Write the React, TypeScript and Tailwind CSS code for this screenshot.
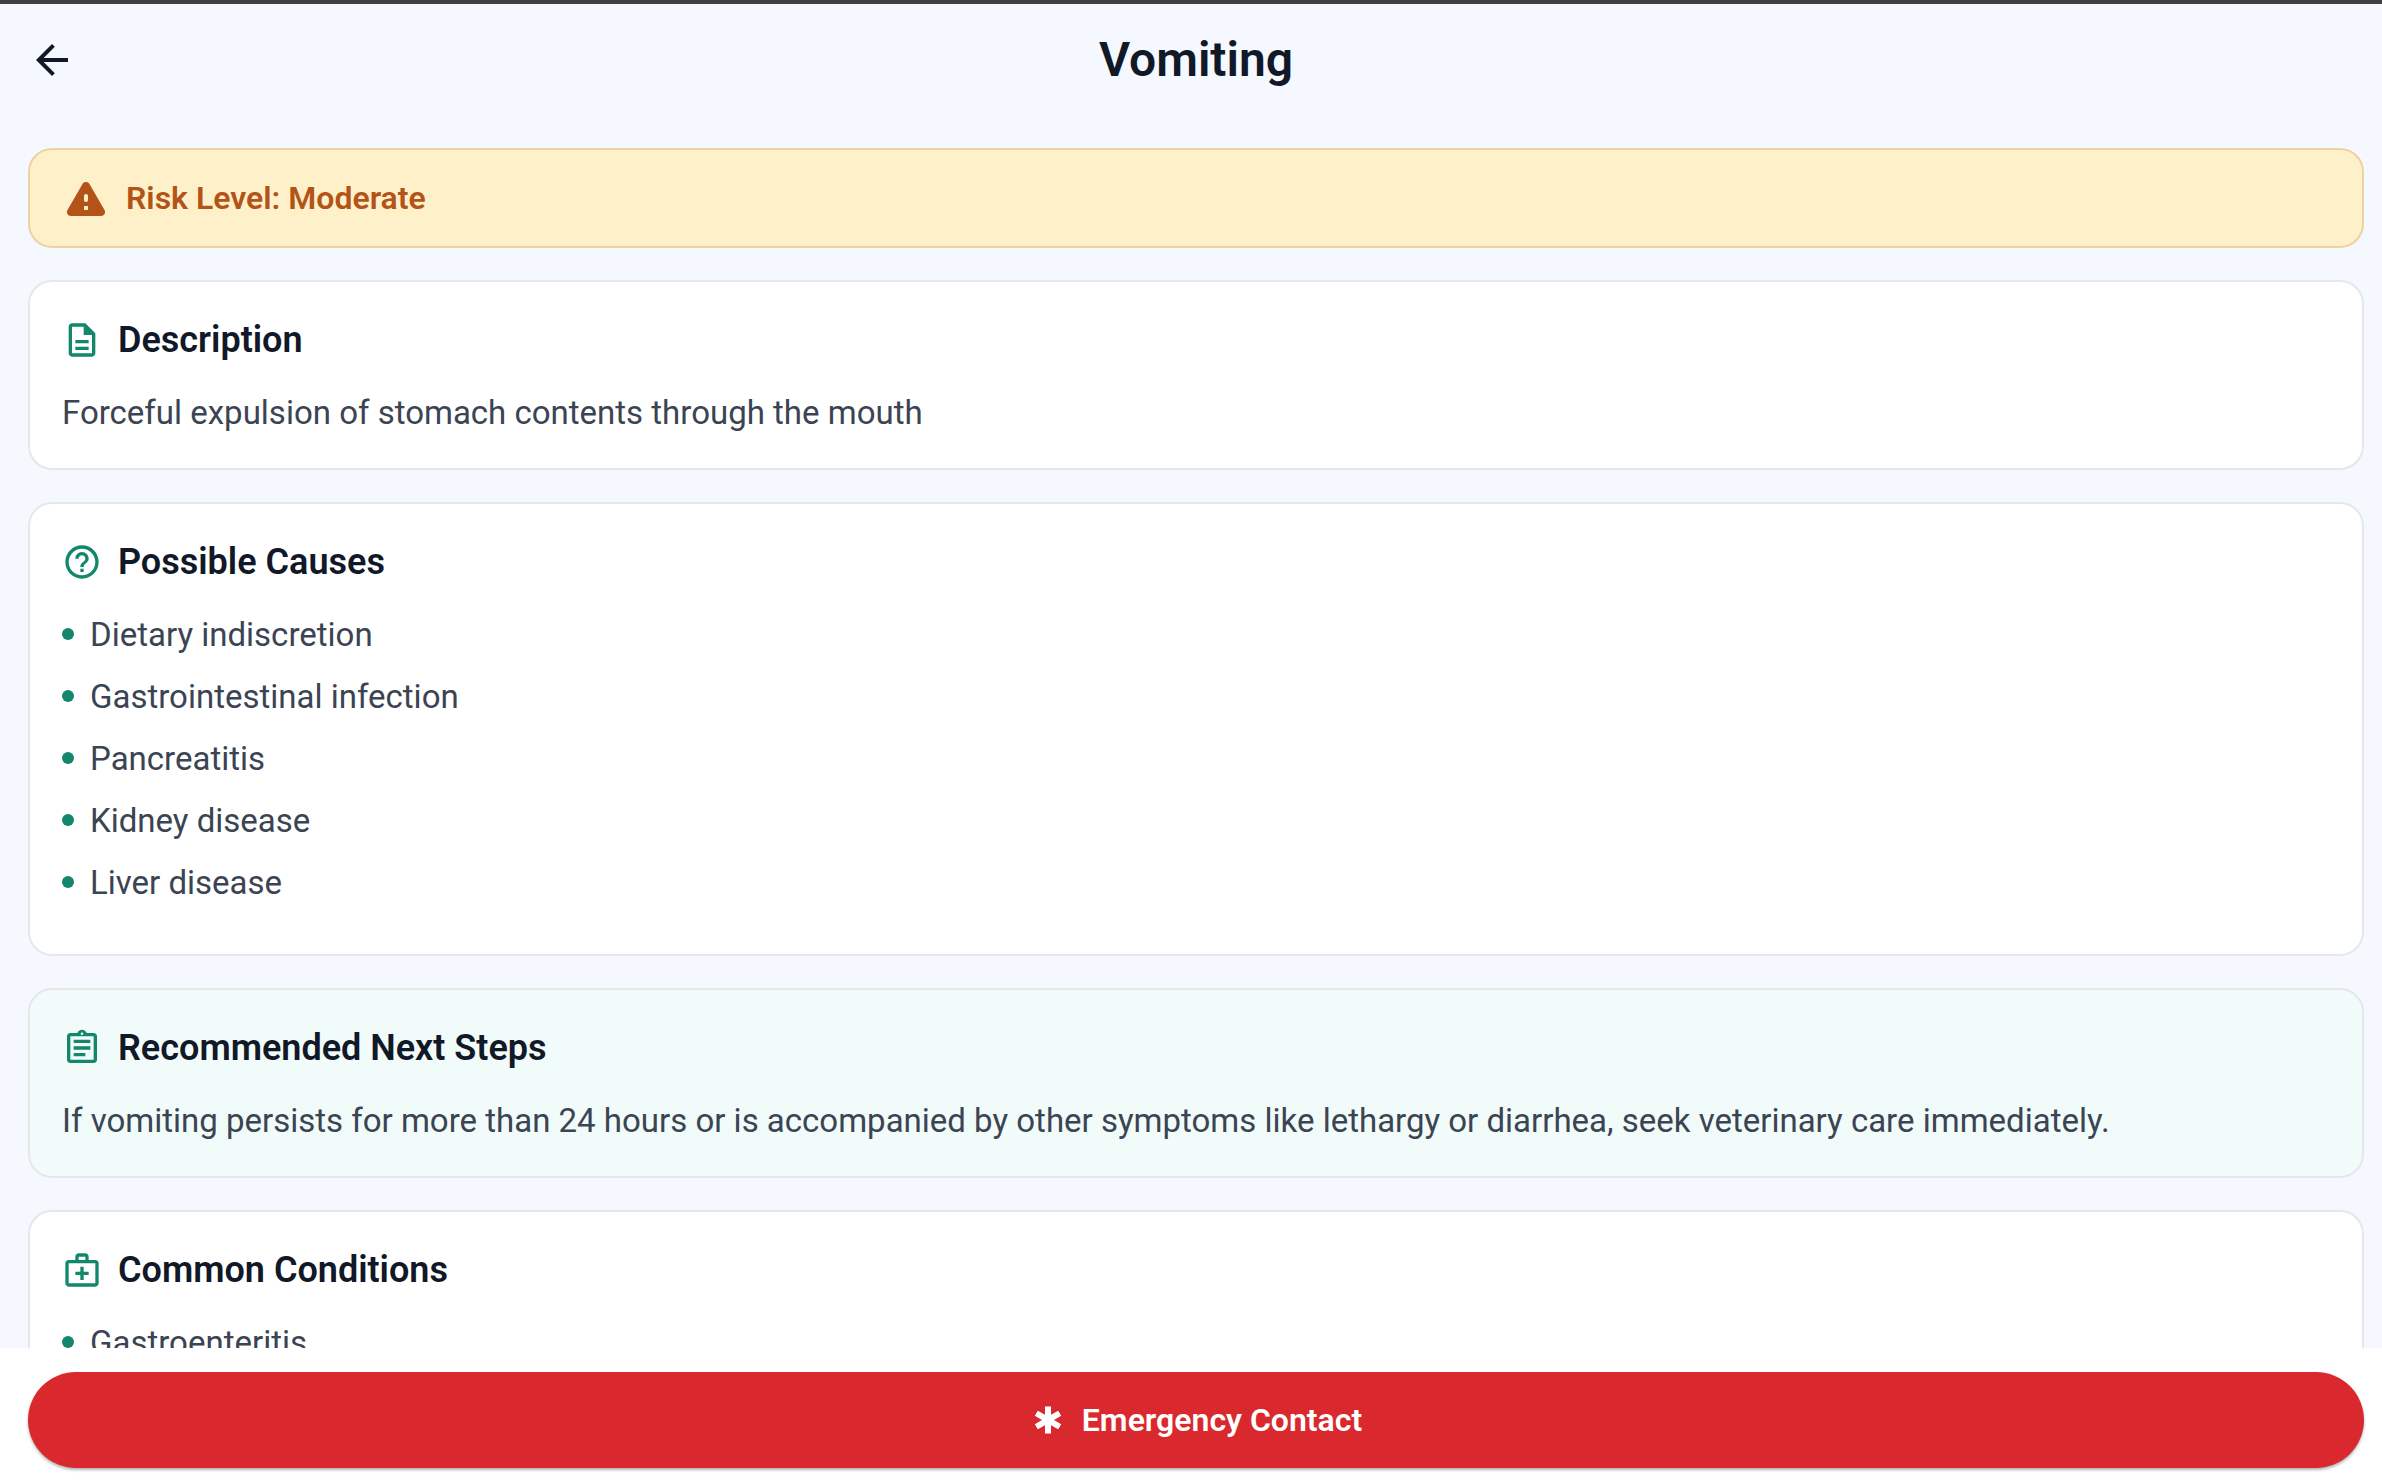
import type { ReactNode } from "react";
import {
  MdArrowBack,
  MdEmergency,
  MdHelpOutline,
  MdOutlineAssignment,
  MdOutlineDescription,
  MdOutlineMedicalServices,
} from "react-icons/md";

const causes = [
  "Dietary indiscretion",
  "Gastrointestinal infection",
  "Pancreatitis",
  "Kidney disease",
  "Liver disease",
];

const conditions = ["Gastroenteritis"];

function WarningIcon() {
  return (
    <svg viewBox="0 0 24 24" className="size-12 shrink-0" fill="currentColor" aria-hidden="true">
      <path d="M4.47 21h15.06c1.54 0 2.5-1.67 1.73-3L13.73 4.99c-.77-1.33-2.69-1.33-3.46 0L2.74 18c-.77 1.33.19 3 1.73 3zM12 14c-.55 0-1-.45-1-1v-2c0-.55.45-1 1-1s1 .45 1 1v2c0 .55-.45 1-1 1zm1 4h-2v-2h2v2z" />
    </svg>
  );
}

function Card({
  icon,
  title,
  tinted = false,
  children,
}: {
  icon: ReactNode;
  title: string;
  tinted?: boolean;
  children: ReactNode;
}) {
  return (
    <section
      className={`rounded-3xl border-2 border-[#e5e7eb] p-8 ${tinted ? "bg-[#f1fbf9]" : "bg-white"}`}
    >
      <div className="mb-6 flex items-center gap-4">
        <span className="shrink-0 text-[40px] text-[#12876b]">{icon}</span>
        <h2 className="text-[36px] leading-[52px] font-semibold text-[#111827]">{title}</h2>
      </div>
      {children}
    </section>
  );
}

function BulletList({ items }: { items: string[] }) {
  return (
    <ul>
      {items.map((item) => (
        <li key={item} className="mb-4 flex items-start gap-4">
          <span className="mt-4 size-3 shrink-0 rounded-full bg-[#12876b]" />
          <span className="text-[33px] leading-[46px] text-[#3b4453]">{item}</span>
        </li>
      ))}
    </ul>
  );
}

export default function App() {
  return (
    <div className="flex h-screen flex-col border-t-4 border-[#414141] bg-[#f5f8ff] font-[Roboto,sans-serif]">
      <header className="grid h-28 shrink-0 grid-cols-[1fr_auto_1fr] items-center pr-[18px] pl-7">
        <button type="button" aria-label="Back" className="justify-self-start text-5xl text-[#111827]">
          <MdArrowBack />
        </button>
        <h1 className="text-[48px] leading-none font-semibold text-[#111827]">Vomiting</h1>
      </header>

      <main className="flex min-h-0 flex-1 flex-col gap-8 overflow-y-auto pt-8 pr-[18px] pl-7 [scrollbar-width:none] *:shrink-0">
        <div className="flex items-center gap-4 rounded-3xl border-2 border-[#eed2a2] bg-[#fef1ca] px-8 py-6 text-[#b45318]">
          <WarningIcon />
          <p className="text-[32px] leading-[46px] font-semibold">Risk Level: Moderate</p>
        </div>

        <Card icon={<MdOutlineDescription />} title="Description">
          <p className="text-[33px] leading-[46px] text-[#3b4453]">
            Forceful expulsion of stomach contents through the mouth
          </p>
        </Card>

        <Card icon={<MdHelpOutline />} title="Possible Causes">
          <BulletList items={causes} />
        </Card>

        <Card icon={<MdOutlineAssignment />} title="Recommended Next Steps" tinted>
          <p className="text-[33px] leading-[46px] text-[#3b4453]">
            If vomiting persists for more than 24 hours or is accompanied by other symptoms like
            lethargy or diarrhea, seek veterinary care immediately.
          </p>
        </Card>

        <Card icon={<MdOutlineMedicalServices />} title="Common Conditions">
          <BulletList items={conditions} />
        </Card>
      </main>

      <footer className="shrink-0 bg-white pt-6 pr-[18px] pb-3 pl-7">
        <button
          type="button"
          className="flex h-24 w-full items-center justify-center gap-4 rounded-full bg-[#d9292e] text-white shadow-[0_2px_3px_rgba(0,0,0,0.3)]"
        >
          <MdEmergency className="size-9" />
          <span className="text-[32px] leading-[46px] font-semibold">Emergency Contact</span>
        </button>
      </footer>
    </div>
  );
}
